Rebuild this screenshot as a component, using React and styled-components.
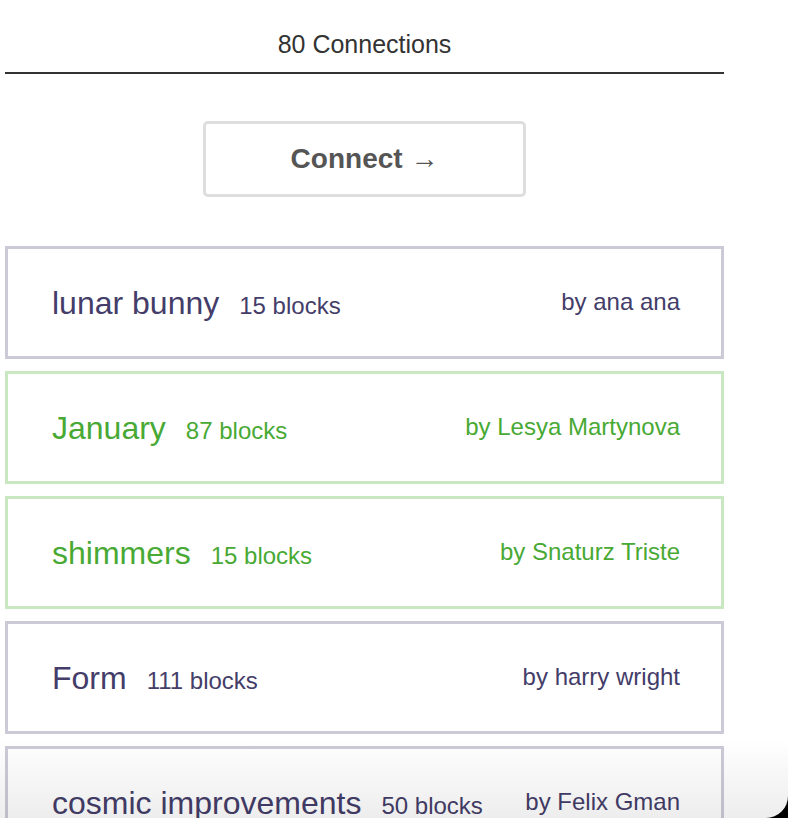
import React from 'react';
import styled, { createGlobalStyle } from 'styled-components';

const GlobalStyle = createGlobalStyle`
  html, body {
    margin: 0;
    padding: 0;
    background: #000;
    font-family: "Liberation Sans", Arial, sans-serif;
  }
`;

const channels = [
  { title: 'lunar bunny', blocks: 15, author: 'ana ana', color: 'purple' },
  { title: 'January', blocks: 87, author: 'Lesya Martynova', color: 'green' },
  { title: 'shimmers', blocks: 15, author: 'Snaturz Triste', color: 'green' },
  { title: 'Form', blocks: 111, author: 'harry wright', color: 'purple' },
  { title: 'cosmic improvements', blocks: 50, author: 'Felix Gman', color: 'purple' },
];

const palette = {
  purple: { text: '#443d69', border: '#cdcad7' },
  green: { text: '#48a934', border: '#c9e7c1' },
};

const App = () => (
  <>
    <GlobalStyle />
    <Window>
      <Column>
        <Header>80 Connections</Header>
        <ButtonRow>
          <ConnectButton>Connect →</ConnectButton>
        </ButtonRow>
        <List>
          {channels.map((c) => (
            <Card key={c.title} $tone={c.color}>
              <TitleGroup>
                <Title>{c.title}</Title>
                <Count>{c.blocks} blocks</Count>
              </TitleGroup>
              <Author>by {c.author}</Author>
            </Card>
          ))}
        </List>
      </Column>
      <BottomFade />
    </Window>
  </>
);

const Window = styled.div`
  position: relative;
  width: 788px;
  height: 818px;
  background: #fff;
  border-bottom-right-radius: 22px;
  overflow: hidden;
`;

const Column = styled.div`
  width: 719px;
  margin-left: 5px;
  display: flex;
  flex-direction: column;
`;

const Header = styled.div`
  padding-top: 28px;
  padding-bottom: 12px;
  line-height: 32px;
  font-size: 25px;
  color: #333;
  text-align: center;
  border-bottom: 2px solid #333;
`;

const ButtonRow = styled.div`
  display: flex;
  justify-content: center;
  padding: 47px 0 49px;
`;

const ConnectButton = styled.button`
  width: 323px;
  height: 76px;
  padding: 0;
  background: #fff;
  border: 3px solid #dedede;
  border-radius: 5px;
  font-family: "Liberation Sans", Arial, sans-serif;
  font-weight: bold;
  font-size: 28px;
  color: #555;
  cursor: pointer;
`;

const List = styled.div`
  display: flex;
  flex-direction: column;
  gap: 12px;
`;

const Card = styled.div`
  box-sizing: border-box;
  height: 113px;
  flex-shrink: 0;
  display: flex;
  align-items: center;
  justify-content: space-between;
  padding: 2px 41px 0 44px;
  border: 3px solid ${(p) => palette[p.$tone].border};
  color: ${(p) => palette[p.$tone].text};
`;

const TitleGroup = styled.div`
  display: flex;
  align-items: baseline;
  gap: 20px;
`;

const Title = styled.span`
  font-size: 32px;
`;

const Count = styled.span`
  font-size: 24px;
`;

const Author = styled.span`
  font-size: 24px;
  margin-bottom: 3px;
`;

const BottomFade = styled.div`
  position: absolute;
  left: 0;
  right: 0;
  bottom: 0;
  height: 80px;
  pointer-events: none;
  background: linear-gradient(to bottom, rgba(0, 0, 0, 0), rgba(0, 0, 0, 0.07));
`;

export default App;
